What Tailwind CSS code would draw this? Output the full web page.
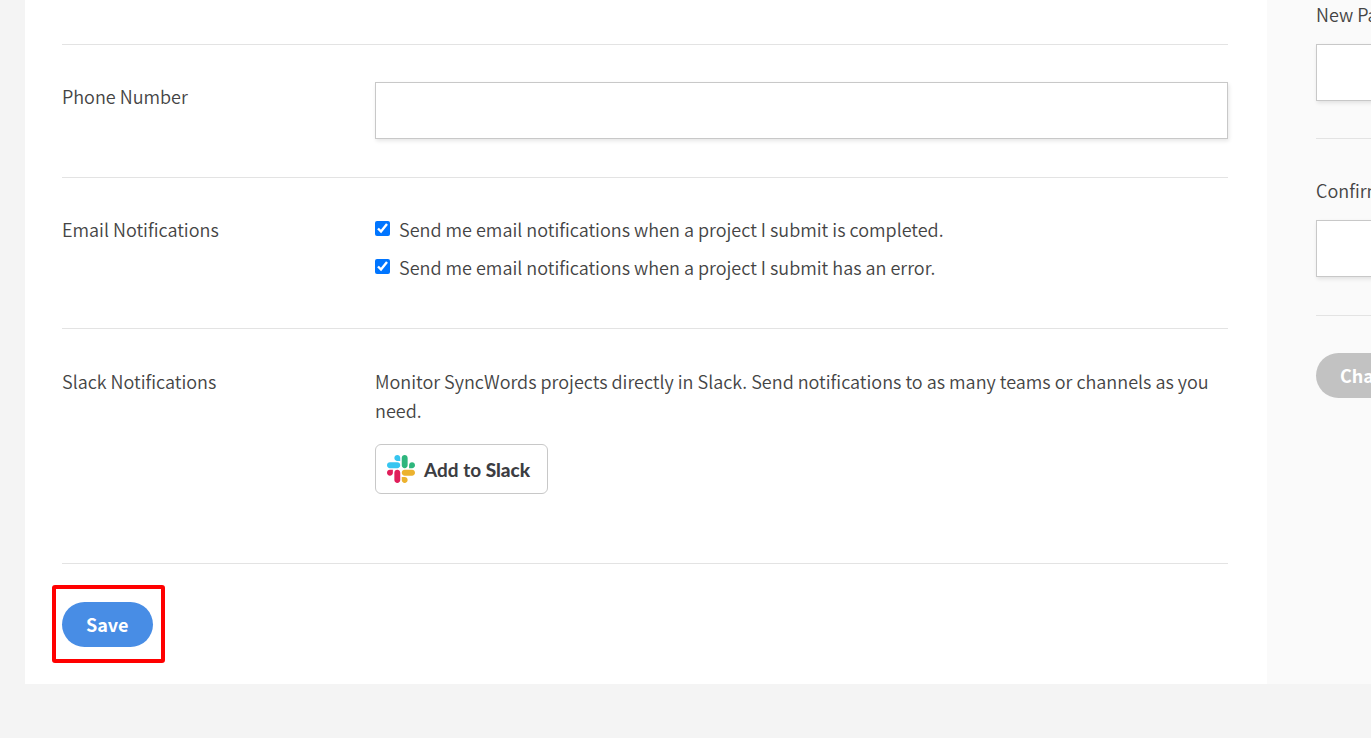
<!DOCTYPE html>
<html lang="en">
  <head>
    <meta charset="UTF-8" />
    <meta name="viewport" content="width=device-width, initial-scale=1.0" />
    <title>Account Settings</title>
    <script src="https://cdn.jsdelivr.net/npm/@tailwindcss/browser@4"></script>
  </head>
  <body
    class="bg-[#f4f4f4] font-['Noto_Sans_CJK_SC','Noto_Sans',sans-serif] font-[350] text-[18px] leading-[29px] text-[#444] overflow-x-hidden"
  >
    <div class="flex pl-[25px] pb-[54px]">
      <!-- Profile form -->
      <main class="flex-1 min-w-0 bg-white pl-[37px] pr-[39px] pb-[37px]">
        <form>
          <div class="h-[45px] border-b border-[#e3e3e3]"></div>

          <div class="flex pt-[37px] pb-[38px] border-b border-[#e3e3e3]">
            <label for="phone" class="w-[313px] shrink-0">Phone Number</label>
            <input
              type="tel"
              id="phone"
              class="flex-1 min-w-0 h-[57px] px-4 bg-white border border-[#c8c8c8] shadow-[1px_2px_4px_rgba(0,0,0,0.1)]"
            />
          </div>

          <fieldset class="flex py-[37px] border-b border-[#e3e3e3]">
            <div class="w-[313px] shrink-0">Email Notifications</div>
            <div class="flex-1">
              <label class="flex items-start mb-[9px]">
                <input type="checkbox" checked class="size-[15px] mt-[6px] mr-[9px]" />
                Send me email notifications when a project I submit is completed.
              </label>
              <label class="flex items-start mb-[9px]">
                <input type="checkbox" checked class="size-[15px] mt-[6px] mr-[9px]" />
                Send me email notifications when a project I submit has an error.
              </label>
            </div>
          </fieldset>

          <div class="flex pt-[38px] pb-[69px] border-b border-[#e3e3e3]">
            <div class="w-[313px] shrink-0">Slack Notifications</div>
            <div class="flex-1">
              <p>
                Monitor SyncWords projects directly in Slack. Send notifications
                to as many teams or channels as you need.
              </p>
              <a
                href="#"
                class="mt-[19px] flex items-center w-[173px] h-[50px] pl-[11px] gap-[9px] bg-white border border-[#c8c8c8] rounded-md font-['Lato',sans-serif] font-bold text-[19px] text-[#3c3d42] whitespace-nowrap"
              >
                <svg class="size-7 shrink-0" viewBox="0 0 122.8 122.8" aria-hidden="true">
                  <path fill="#e01e5a" d="M25.8 77.6c0 7.1-5.8 12.9-12.9 12.9S0 84.7 0 77.6s5.8-12.9 12.9-12.9h12.9v12.9zm6.5 0c0-7.1 5.8-12.9 12.9-12.9s12.9 5.8 12.9 12.9v32.3c0 7.1-5.8 12.9-12.9 12.9s-12.9-5.8-12.9-12.9V77.6z" />
                  <path fill="#36c5f0" d="M45.2 25.8c-7.1 0-12.9-5.8-12.9-12.9S38.1 0 45.2 0s12.9 5.8 12.9 12.9v12.9H45.2zm0 6.5c7.1 0 12.9 5.8 12.9 12.9s-5.8 12.9-12.9 12.9H12.9C5.8 58.1 0 52.3 0 45.2s5.8-12.9 12.9-12.9h32.3z" />
                  <path fill="#2eb67d" d="M97 45.2c0-7.1 5.8-12.9 12.9-12.9s12.9 5.8 12.9 12.9-5.8 12.9-12.9 12.9H97V45.2zm-6.5 0c0 7.1-5.8 12.9-12.9 12.9s-12.9-5.8-12.9-12.9V12.9C64.7 5.8 70.5 0 77.6 0s12.9 5.8 12.9 12.9v32.3z" />
                  <path fill="#ecb22e" d="M77.6 97c7.1 0 12.9 5.8 12.9 12.9s-5.8 12.9-12.9 12.9-12.9-5.8-12.9-12.9V97h12.9zm0-6.5c-7.1 0-12.9-5.8-12.9-12.9s5.8-12.9 12.9-12.9h32.3c7.1 0 12.9 5.8 12.9 12.9s-5.8 12.9-12.9 12.9H77.6z" />
                </svg>
                <span>Add to <span class="font-black">Slack</span></span>
              </a>
            </div>
          </div>

          <div class="relative mt-[38px] w-fit">
            <button type="submit" class="block h-[45px] px-6 rounded-full bg-[#488de5] text-white font-bold">
              Save
            </button>
            <!-- highlight around the button -->
            <div class="absolute -left-[10px] -right-[12px] -top-[17px] -bottom-[16px] border-4 border-[#ff0000] rounded-[3px] pointer-events-none"></div>
          </div>
        </form>
      </main>

      <!-- Password form, cut off by the window edge -->
      <aside class="w-[104px] shrink-0 overflow-hidden bg-[#fafafa] pl-[49px]">
        <form class="w-[320px]">
          <div class="pb-[37px] border-b border-[#e3e3e3]">
            <label for="new-password" class="block mb-[15px]">New Password</label>
            <input
              type="password"
              id="new-password"
              class="block w-full h-[57px] px-4 bg-white border border-[#c8c8c8] shadow-[1px_2px_4px_rgba(0,0,0,0.1)]"
            />
          </div>
          <div class="pt-[37px] pb-[38px] border-b border-[#e3e3e3]">
            <label for="confirm-password" class="block mb-[15px]">Confirm Password</label>
            <input
              type="password"
              id="confirm-password"
              class="block w-full h-[57px] px-4 bg-white border border-[#c8c8c8] shadow-[1px_2px_4px_rgba(0,0,0,0.1)]"
            />
          </div>
          <button type="submit" class="mt-[37px] h-[45px] px-6 rounded-full bg-[#c2c2c2] text-white font-bold">
            Change Password
          </button>
        </form>
      </aside>
    </div>
  </body>
</html>
